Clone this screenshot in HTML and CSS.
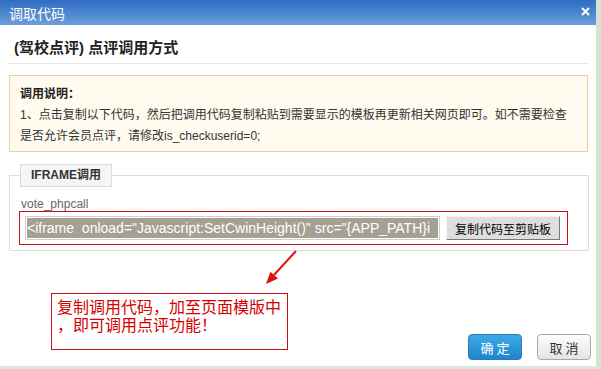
FILE: index.html
```html
<!DOCTYPE html>
<html>

<head>
    <meta charset="utf-8">
    <title>调取代码</title>
    <link rel="stylesheet" href="styles.css">
</head>

<body>
    <div class="dialog">
        <div class="titlebar">
            <span class="title">调取代码</span>
            <span class="close">
                <svg width="9" height="9" viewBox="0 0 9 9">
                    <path d="M1 1 L8 8 M8 1 L1 8" stroke="#fff" stroke-width="2" fill="none"/>
                </svg>
            </span>
        </div>

        <div class="content">
            <h2 class="heading">(驾校点评) 点评调用方式</h2>

            <div class="notice">
                <strong>调用说明：</strong><br>
                1、点击复制以下代码，然后把调用代码复制粘贴到需要显示的模板再更新相关网页即可。如不需要检查<br>
                是否允许会员点评，请修改is_checkuserid=0;
            </div>

            <fieldset class="call-box">
                <legend>IFRAME调用</legend>
                <div class="call-label">vote_phpcall</div>
                <div class="code-row">
                    <div class="code-input">
                        <span class="selected">&lt;iframe&nbsp; onload="Javascript:SetCwinHeight()" src="{APP_PATH}i</span>
                    </div>
                    <button type="button" class="copy-btn">复制代码至剪贴板</button>
                </div>
            </fieldset>

            <div class="footer">
                <div class="tip">
                    <svg class="tip-arrow" width="40" height="40" viewBox="0 0 40 40">
                        <path d="M35 3 L13 27" stroke="#e01010" stroke-width="2" fill="none"/>
                        <path d="M5 36 L17 30.5 L9.4 23.7 Z" fill="#e01010"/>
                    </svg>
                    复制调用代码，加至页面模版中<br>，即可调用点评功能！
                </div>
                <div class="actions">
                    <button type="button" class="btn-ok">确定</button>
                    <button type="button" class="btn-cancel">取消</button>
                </div>
            </div>
        </div>
    </div>
</body>

</html>
```

FILE: styles.css
```css
body {
    margin: 0;
    font-family: "Liberation Sans", "Noto Sans CJK SC", sans-serif;
    font-size: 12px;
    color: #333;
    background-color: #fff;
}

.dialog {
    width: 601px;
    height: 369px;
    box-sizing: border-box;
    border-right: 5px solid #d3e5d1;
    border-bottom: 3px solid #dde5dd;
    display: flex;
    flex-direction: column;
}

.titlebar {
    height: 25px;
    background: linear-gradient(#2f6cc2, #4f88d0 55%, #6f9fd9);
    display: flex;
    align-items: center;
    justify-content: space-between;
    padding: 0 6px 0 9px;
}

.title {
    color: #fff;
    font-size: 14px;
    font-family: "Noto Sans CJK SC", sans-serif;
}

.close {
    display: flex;
    margin-top: -3px;
}

.content {
    flex: 1;
    display: flex;
    flex-direction: column;
    padding: 0 8px 0 9px;
}

.heading {
    margin: 0 0 0 -1px;
    padding: 8px 0 0 6px;
    line-height: 30px;
    font-size: 15px;
    font-weight: bold;
    color: #222;
    border-bottom: 1px solid #efe4e4;
}

.notice {
    margin-top: 11px;
    padding: 8px 10px 4px;
    line-height: 21px;
    background-color: #fffbee;
    border: 1px solid #e6d2a6;
    color: #333;
}

.notice strong {
    color: #222;
}

.call-box {
    margin: 12px 0 0;
    padding: 10px 20px 5px 10px;
    border: 1px solid #dcdcdc;
}

.call-box legend {
    padding: 0 10px;
    line-height: 21px;
    font-weight: bold;
    color: #333;
    background-color: #f5f5f5;
    border: 1px solid #dcdcdc;
}

.call-label {
    line-height: 14px;
    color: #666;
    margin-left: 1px;
}

.code-row {
    margin-left: -1px;
    width: 549px;
    box-sizing: border-box;
    display: flex;
    gap: 6px;
    padding: 4px 6px 4px 5px;
    border: 1px solid #c8101c;
}

.code-input {
    width: 415px;
    height: 24px;
    box-sizing: border-box;
    border: 1px solid #cfcfcf;
    padding: 1px;
    overflow: hidden;
}

.selected {
    display: block;
    white-space: nowrap;
    line-height: 20px;
    font-size: 14px;
    color: #fff;
    background-color: #a5a192;
}

.copy-btn {
    width: 114px;
    height: 24px;
    padding: 0;
    font-family: "Noto Sans CJK SC", sans-serif;
    font-size: 12px;
    color: #000;
    background-color: #dedede;
    border: 1px solid;
    border-color: #f2f2f2 #7a7a7a #7a7a7a #f2f2f2;
}

.footer {
    flex: 1;
    display: flex;
    justify-content: space-between;
    align-items: flex-start;
}

.tip {
    position: relative;
    margin: 42px 0 0 42px;
    width: 237px;
    height: 57px;
    box-sizing: border-box;
    padding: 3px 5px;
    border: 1px solid #c8101c;
    color: #d40000;
    font-family: "Noto Sans CJK SC", sans-serif;
    font-size: 16px;
    line-height: 18px;
}

.tip-arrow {
    position: absolute;
    left: 209px;
    top: -46px;
}

.actions {
    align-self: flex-end;
    display: flex;
    gap: 15px;
    margin: 0 -3px 6px 0;
}

.actions button {
    width: 54px;
    height: 26px;
    border-radius: 4px;
    font-family: "Noto Sans CJK SC", sans-serif;
    font-size: 13px;
    letter-spacing: 3px;
    padding: 0 0 0 3px;
    cursor: pointer;
}

.btn-ok {
    color: #fff;
    background: linear-gradient(#3ea8e6, #1f86cf);
    border: 1px solid #2a7cc0;
}

.btn-cancel {
    color: #333;
    background: linear-gradient(#fdfdfd, #e4e4e4);
    border: 1px solid #a8a8a8;
}
```
